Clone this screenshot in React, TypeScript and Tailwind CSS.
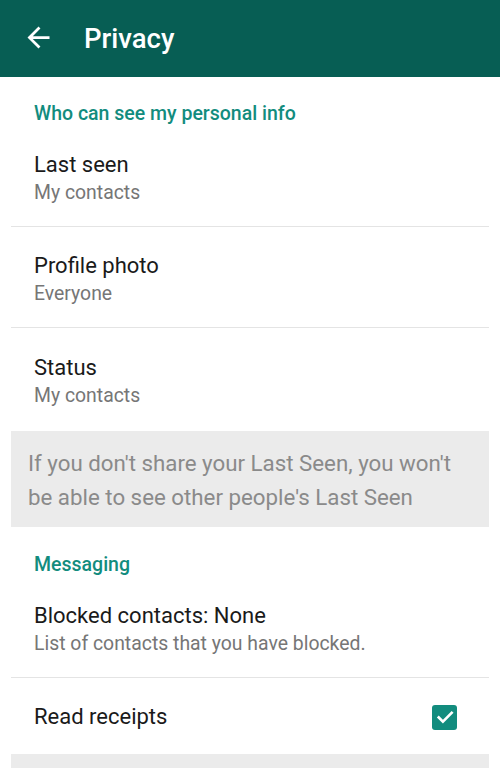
import React from "react"

const font = { fontFamily: "Roboto, 'Noto Sans', sans-serif" }

function SectionHeader({ title }: { title: string }) {
  return (
    <div className="h-[50px] flex items-end px-[23px]">
      <span className="text-[19.5px] leading-[24px] font-medium text-[#128C7E]">{title}</span>
    </div>
  )
}

function Row({ title, subtitle, last }: { title: string; subtitle: string; last?: boolean }) {
  return (
    <div className={`h-[101px] flex flex-col justify-center px-[23px] pt-[5px] ${last ? "" : "border-b border-[#e4e4e4]"}`}>
      <div className="text-[22px] leading-[28px] text-[#1a1a1a]">{title}</div>
      <div className="text-[19.4px] leading-[27px] text-[#767676]">{subtitle}</div>
    </div>
  )
}

export default function App() {
  return (
    <div className="w-[500px] h-[768px] bg-white overflow-hidden" style={font}>
      {/* toolbar */}
      <header className="h-[77px] bg-[#075E54] flex items-center">
        <svg width="33" height="33" viewBox="0 0 24 24" className="ml-[22px] mt-[-2px]" fill="white">
          <path d="M20 11H7.83l5.59-5.59L12 4l-8 8 8 8 1.41-1.41L7.83 13H20v-2z" />
        </svg>
        <h1 className="ml-[29px] text-[27.5px] font-medium text-white leading-none">Privacy</h1>
      </header>

      <div className="px-[11px]">
        <div className="h-[49px] flex items-end px-[23px]">
          <span className="text-[19.5px] leading-[24px] font-medium text-[#128C7E]">Who can see my personal info</span>
        </div>
        <Row title="Last seen" subtitle="My contacts" />
        <Row title="Profile photo" subtitle="Everyone" />
        <Row title="Status" subtitle="My contacts" last />

        <div className="mt-[2px] h-[96px] bg-[#ebebeb] px-[17px] pt-[15px] text-[22.3px] leading-[34px] text-[#8a8a8a]">
          If you don't share your Last Seen, you won't be able to see other people's Last Seen
        </div>

        <SectionHeader title="Messaging" />
        <Row title="Blocked contacts: None" subtitle="List of contacts that you have blocked." />

        <div className="h-[76px] flex items-center justify-between pl-[23px] pr-[32px] pt-[2px]">
          <span className="text-[22px] leading-[28px] text-[#1a1a1a]">Read receipts</span>
          <div className="w-[25px] h-[25px] rounded-[3px] bg-[#128C7E] flex items-center justify-center">
            <svg width="20" height="20" viewBox="0 0 24 24" fill="none" stroke="white" strokeWidth="3.2" strokeLinecap="square">
              <path d="M4.5 12.5l5 5L20 7" />
            </svg>
          </div>
        </div>

        <div className="h-[40px] bg-[#ebebeb]" />
      </div>
    </div>
  )
}
